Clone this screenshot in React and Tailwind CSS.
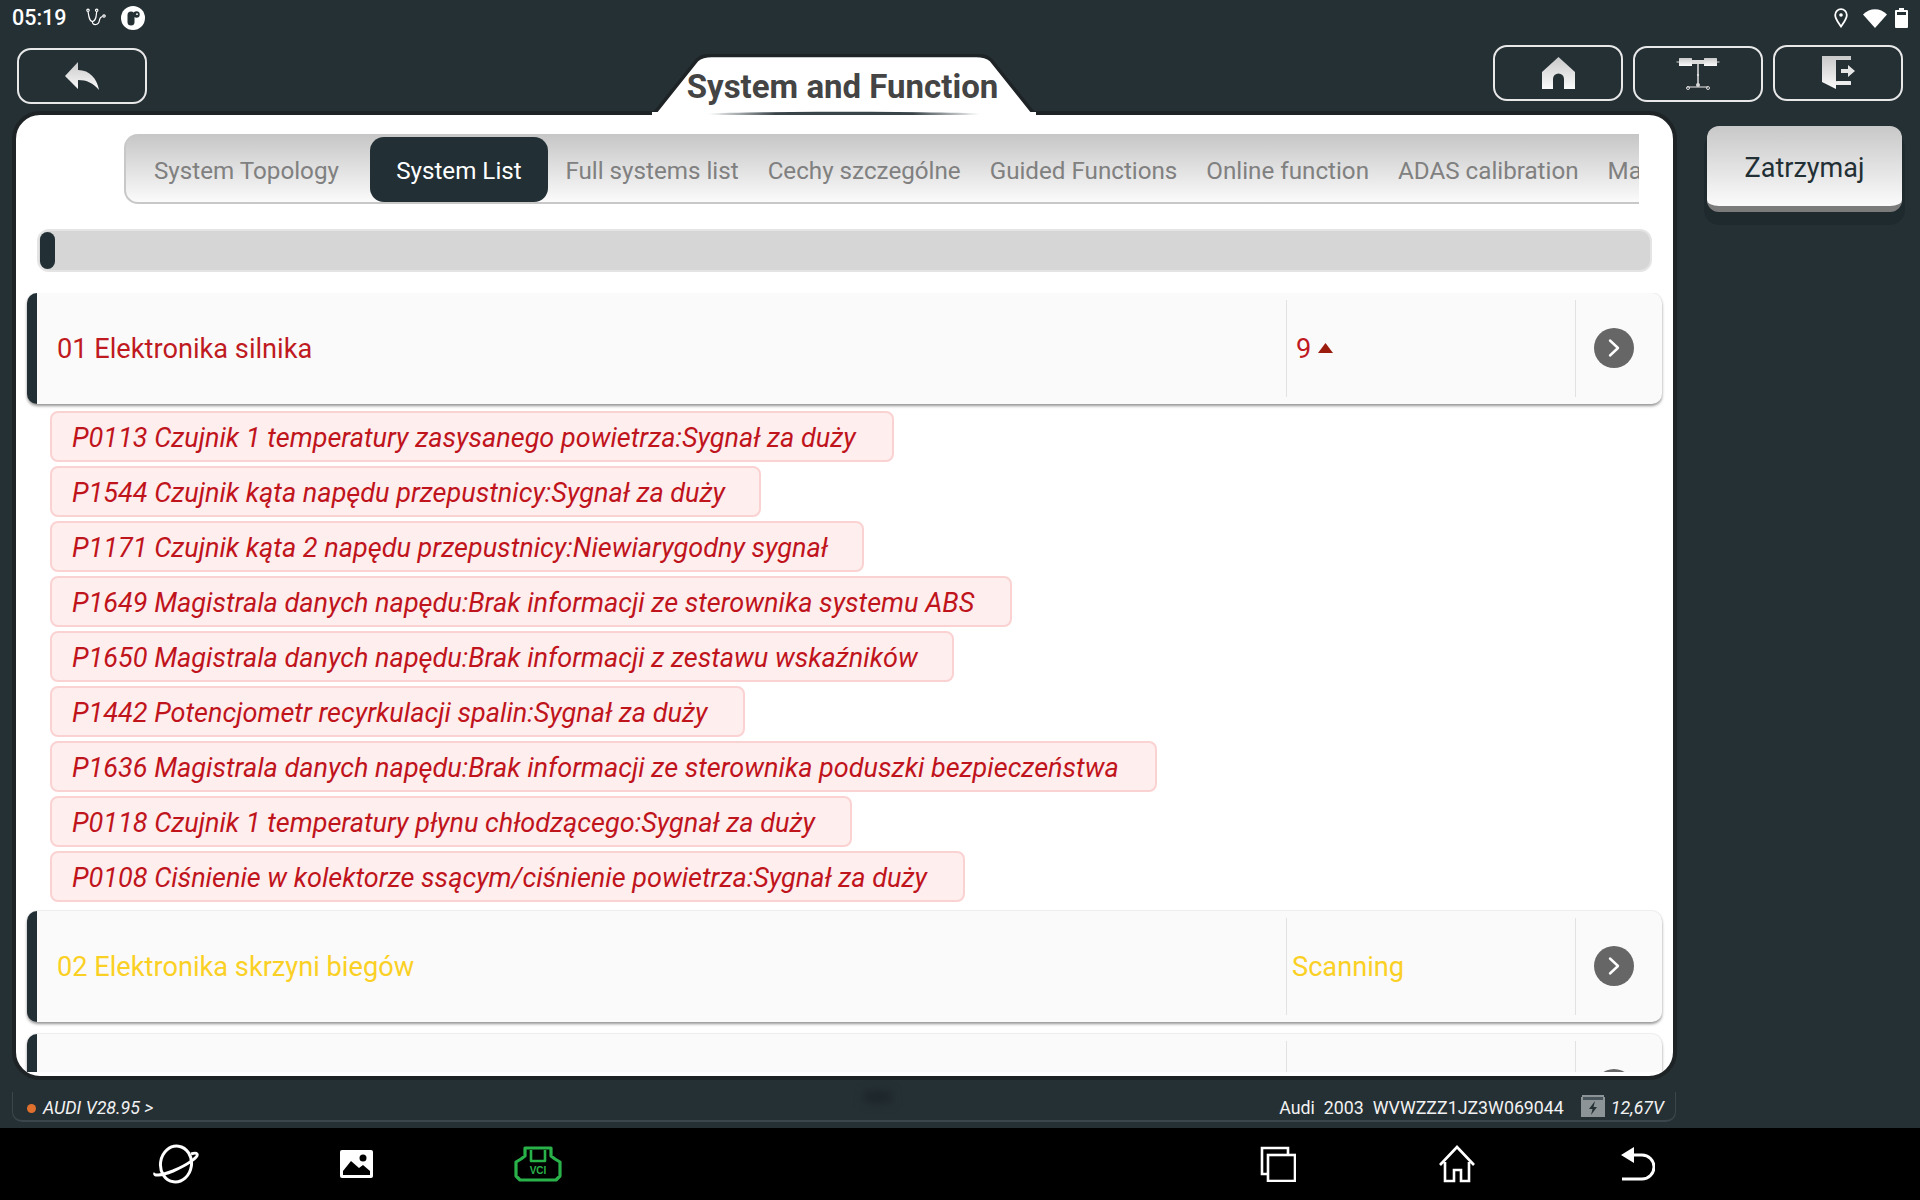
import React from "react";

const tabs = ["Full systems list", "Cechy szczególne", "Guided Functions", "Online function", "ADAS calibration", "Maintenance"];
const faults = [
  ["P0113 Czujnik 1 temperatury zasysanego powietrza:Sygnał za duży", 844],
  ["P1544 Czujnik kąta napędu przepustnicy:Sygnał za duży", 711],
  ["P1171 Czujnik kąta 2 napędu przepustnicy:Niewiarygodny sygnał", 814],
  ["P1649 Magistrala danych napędu:Brak informacji ze sterownika systemu ABS", 962],
  ["P1650 Magistrala danych napędu:Brak informacji z zestawu wskaźników", 904],
  ["P1442 Potencjometr recyrkulacji spalin:Sygnał za duży", 695],
  ["P1636 Magistrala danych napędu:Brak informacji ze sterownika poduszki bezpieczeństwa", 1107],
  ["P0118 Czujnik 1 temperatury płynu chłodzącego:Sygnał za duży", 802],
  ["P0108 Ciśnienie w kolektorze ssącym/ciśnienie powietrza:Sygnał za duży", 915],
];

function Grad({ id }) {
  return (
    <defs>
      <linearGradient id={id} x1="0" y1="0" x2="0" y2="1">
        <stop offset="0" stopColor="#c9c9c9" />
        <stop offset="1" stopColor="#fbfbfb" />
      </linearGradient>
    </defs>
  );
}

function OutlineButton({ children, className }) {
  return (
    <div className={"w-[130px] h-[56px] rounded-[14px] border-2 border-[#e8e8e8] flex items-center justify-center " + className}>
      {children}
    </div>
  );
}

function Chevron() {
  return (
    <div className="w-10 h-10 rounded-full bg-[#666666] flex items-center justify-center">
      <svg width="14" height="20" viewBox="0 0 14 20" fill="none">
        <path d="M3 2.5 L11 10 L3 17.5" stroke="#fff" strokeWidth="2.4" strokeLinecap="round" strokeLinejoin="round" />
      </svg>
    </div>
  );
}

function Row({ label, color, status, statusPad }) {
  return (
    <div className="h-[111px] shrink-0 flex rounded-[10px] border-l-[10px] border-[#222f34] bg-[#fafafa] py-[7px] shadow-[0_2px_3px_rgba(0,0,0,0.42),0_-1px_1px_rgba(0,0,0,0.06)]">
      <div className={"flex-1 flex items-center pl-5 pt-[2px] text-[27.2px] leading-none " + color}>{label}</div>
      <div className={"w-[289px] shrink-0 border-l border-[#e2e2e2] flex items-center pt-[2px] text-[27.2px] leading-none " + statusPad + " " + color}>{status}</div>
      <div className="w-[87px] shrink-0 border-l border-[#e2e2e2] flex items-center justify-center pr-[10px] pb-[2px]">
        <Chevron />
      </div>
    </div>
  );
}

export default function App() {
  return (
    <div className="w-[1920px] h-[1200px] overflow-hidden flex flex-col bg-[#253035] [font-family:Roboto,sans-serif]">
      {/* Android status bar */}
      <div className="h-[36px] shrink-0 flex items-center pl-3 pr-3 text-white">
        <span className="text-[21.5px] font-medium leading-none">05:19</span>
        <svg className="ml-[19px]" width="22" height="20" viewBox="0 0 22 20" fill="none" stroke="#fff" strokeWidth="1.2">
          <circle cx="2" cy="2.3" r="1.2" />
          <circle cx="10.7" cy="2.3" r="1.2" />
          <path d="M2 3.5 L3 9 Q4 13 6.3 13.5 Q9 13 10 9 L10.7 3.5" />
          <path d="M6.3 13.5 Q6.5 17 10 16.5 Q13 16 13.5 12 Q14 9 16.5 8.5" />
          <circle cx="18" cy="8" r="1.2" />
        </svg>
        <svg className="ml-[13px]" width="24" height="24" viewBox="0 0 24 24">
          <circle cx="12" cy="12" r="12" fill="#fff" />
          <rect x="6.5" y="5.5" width="7" height="14" rx="3.5" fill="#253035" />
          <circle cx="15.5" cy="8.5" r="3.2" fill="#253035" />
          <circle cx="16" cy="8.2" r="0.9" fill="#fff" />
        </svg>
        <div className="ml-auto flex items-center">
          <svg width="14" height="20" viewBox="0 0 14 20" fill="none" stroke="#fff" strokeWidth="1.8">
            <path d="M7 18.5 C4 14 1.2 11 1.2 7 A5.8 5.8 0 0 1 12.8 7 C12.8 11 10 14 7 18.5 Z" />
            <circle cx="7" cy="7" r="1.8" fill="#fff" stroke="none" />
          </svg>
          <svg className="ml-[15px]" width="24" height="19" viewBox="0 0 24 19">
            <path d="M0 5.5 C7 -1.5 17 -1.5 24 5.5 L12 19 Z" fill="#fff" />
          </svg>
          <svg className="ml-[8px]" width="13" height="20" viewBox="0 0 13 20">
            <path d="M4 0 H9 V2 H12 Q13 2 13 3 V19 Q13 20 12 20 H1 Q0 20 0 19 V3 Q0 2 1 2 H4 Z" fill="#fff" />
            <rect x="2" y="4" width="9" height="3" fill="#253035" />
          </svg>
        </div>
      </div>

      {/* Header */}
      <div className="h-[75px] shrink-0 flex items-start relative z-10">
        <OutlineButton className="ml-[17px] mt-[12px]">
          <svg width="36" height="30" viewBox="0 0 36 30">
            <Grad id="g-back" />
            <path d="M0 15 L13 1 V9 C25 9 32 18 34 29 C28 22 22 19 13 19 V28 Z" fill="url(#g-back)" transform="translate(1 0)" />
          </svg>
        </OutlineButton>
        <div className="relative ml-[505px] mt-[18px] w-[384px] h-[61px] flex items-start justify-center">
          <svg className="absolute inset-0" width="384" height="61" viewBox="0 0 384 61" fill="none">
            <defs>
              <linearGradient id="g-under" x1="0" y1="0" x2="1" y2="0">
                <stop offset="0" stopColor="#222f34" stopOpacity="0" />
                <stop offset="0.25" stopColor="#222f34" stopOpacity="0.9" />
                <stop offset="0.75" stopColor="#222f34" stopOpacity="0.9" />
                <stop offset="1" stopColor="#222f34" stopOpacity="0" />
              </linearGradient>
            </defs>
            <path d="M1 61 L45 6 Q50 1.5 60 1.5 H324 Q334 1.5 339 6 L383 61 Z" fill="#fff" stroke="#1e2326" strokeWidth="3.5" strokeLinejoin="round" />
            <rect x="0" y="58" width="384" height="3" fill="#fff" />
            <ellipse cx="192" cy="60" rx="137" ry="2.2" fill="url(#g-under)" />
          </svg>
          <span className="relative -ml-[3px] mt-[13px] text-[33px] font-bold leading-[40px] text-[#444444] whitespace-nowrap">System and Function</span>
        </div>
        <div className="ml-auto mr-[17px] flex gap-[10px] mt-[9px]">
          <OutlineButton>
            <svg width="33" height="33" viewBox="0 0 33 33">
              <Grad id="g-home" />
              <path d="M16.5 0 L33 15 V32 H22 V22 A5.5 5.5 0 0 0 11 22 V32 H0 V15 Z" fill="url(#g-home)" />
            </svg>
          </OutlineButton>
          <OutlineButton className="mt-px">
            <svg width="44" height="34" viewBox="0 0 44 34" fill="none">
              <Grad id="g-topo" />
              <path d="M0.5 5 H43.5" stroke="#d8d8d8" strokeWidth="1" />
              <rect x="3" y="1" width="13" height="8" rx="0.5" fill="url(#g-topo)" />
              <rect x="28" y="1" width="13" height="8" rx="0.5" fill="url(#g-topo)" />
              <rect x="16" y="3" width="12" height="4" fill="#dcdcdc" />
              <path d="M22 7 V28" stroke="#d8d8d8" strokeWidth="1.6" />
              <path d="M11 30 H32" stroke="#cfcfcf" strokeWidth="1.2" />
              <circle cx="22" cy="18" r="1.1" fill="#e4e4e4" />
              <circle cx="22" cy="28" r="2" fill="#d8d8d8" />
              <circle cx="12" cy="31" r="1.5" stroke="#d8d8d8" />
              <circle cx="32" cy="31" r="1.5" stroke="#d8d8d8" />
            </svg>
          </OutlineButton>
          <OutlineButton>
            <svg width="35" height="34" viewBox="0 0 35 34">
              <Grad id="g-exit" />
              <path d="M1 0 H30 V4 H15 V33 L1 26 Z" fill="url(#g-exit)" />
              <rect x="15" y="25" width="15" height="4" rx="0.5" fill="#ededed" />
              <path d="M20 13 H27 V9 L34 15 L27 21 V17 H20 Z" fill="#e6e6e6" />
            </svg>
          </OutlineButton>
        </div>
      </div>

      {/* Main */}
      <div className="flex shrink-0 items-start">
        <div className="ml-3 w-[1665px] h-[969px] rounded-[28px] border-4 border-[#1e2326] bg-white overflow-hidden flex flex-col">
          <div className="ml-[108px] mt-[19px] w-[1515px] h-[70px] shrink-0 overflow-hidden rounded-l-[14px] border-l-2 border-b-2 border-[#c8c8c8] bg-linear-to-b from-[#c6c6c6] to-[#fbfbfb] flex items-center pl-[14px] text-[24.2px] text-[#808080] leading-none whitespace-nowrap">
            <div className="px-[14px] pt-[6px] shrink-0">System Topology</div>
            <div className="ml-[17px] mr-[3px] mt-[2px] w-[178px] h-[65px] shrink-0 rounded-[14px] bg-[#222f34] text-white flex items-center justify-center pt-[4px]">System List</div>
            {tabs.map((t) => (
              <div key={t} className="px-[14.5px] pt-[6px] shrink-0">{t}</div>
            ))}
          </div>

          <div className="mx-[21px] mt-[25px] h-[43px] shrink-0 rounded-[12px] border-2 border-[#e4e4e4] bg-[#d6d6d6] flex items-center p-px">
            <div className="w-[15px] h-[37px] rounded-full bg-[#222f34]" />
          </div>

          <div className="mt-[21px] px-[11px] h-[779px] shrink-0 overflow-hidden flex flex-col">
            <Row
              label="01 Elektronika silnika"
              color="text-[#bf1a1f]"
              statusPad="pl-[9px]"
              status={
                <span className="flex items-center">
                  9
                  <svg className="ml-[7px] mb-[3px]" width="15" height="10" viewBox="0 0 15 10">
                    <path d="M7.5 0 L15 10 H0 Z" fill="#9b1c0c" />
                  </svg>
                </span>
              }
            />
            <div className="mt-[7px] flex flex-col gap-1 pl-[23px] pb-[9px]">
              {faults.map(([text, w]) => (
                <div key={text} style={{ width: w }} className="h-[51px] shrink-0 rounded-[8px] border-2 border-[#fbd2d2] bg-[#ffeeee] flex items-center pl-[20px] pt-[5px] italic text-[27.05px] text-[#c0141c] leading-none whitespace-nowrap">
                  {text}
                </div>
              ))}
            </div>
            <Row label="02 Elektronika skrzyni biegów" color="text-[#fbd024]" statusPad="pl-[5px]" status="Scanning" />
            <div className="mt-3">
              <Row label="" color="" statusPad="" status="" />
            </div>
          </div>
        </div>

        <div className="ml-[30px] mt-[15px] w-[195px] h-[86px] rounded-[12px] border-b-[6px] border-[#7b7b7b] bg-linear-to-b from-[#c8c8c8] to-[#fbfbfb] flex items-center justify-center pt-[5px] text-[27px] text-[#222f34] leading-none shadow-[0_10px_0_3px_#1f2a2f]">
          Zatrzymaj
        </div>
      </div>

      {/* Info strip */}
      <div className="relative ml-3 mt-3 w-[1664px] h-[30px] pt-[4px] shrink-0 rounded-b-[10px] border-b-2 border-l border-r border-[#3b464c] flex items-center text-[17.8px] text-[#f2f2f2] leading-none">
        <span className="ml-[14px] w-[9px] h-[9px] rounded-full bg-[#e0702e]" />
        <span className="ml-[7px] italic">AUDI V28.95 &gt;</span>
        <span className="absolute left-[850px] -top-[1px] w-[30px] h-[12px] rounded-full bg-[#1c2529] blur-[5px]" />
        <span className="ml-auto">Audi</span>
        <span className="ml-[9px]">2003</span>
        <span className="ml-[9px]">WVWZZZ1JZ3W069044</span>
        <svg className="ml-[16px] -mt-[4px]" width="26" height="24" viewBox="0 0 26 24">
          <path d="M2 1 H24 V3 H25 V23 H1 V3 H2 Z" fill="#8c9498" />
          <rect x="3" y="3" width="20" height="3" fill="#4a555b" />
          <path d="M15 7 L9 15 H12.5 L11 21 L17 13 H13.5 Z" fill="#253035" />
        </svg>
        <span className="ml-[5px] mr-[11px] italic">12,67V</span>
      </div>

      {/* Nav bar */}
      <div className="mt-[6px] h-[72px] shrink-0 bg-black relative flex items-center">
        <svg className="ml-[153px]" width="46" height="40" viewBox="0 0 46 40" fill="none" stroke="#fff" strokeWidth="3">
          <ellipse cx="23" cy="20" rx="15.5" ry="18" transform="rotate(8 23 20)" />
          <path d="M2 29 C0 32 7 32 20 27 C34 21 46 13 44 10 C43 8.5 41 9 38 10" />
        </svg>
        <svg className="ml-[141px]" width="33" height="28" viewBox="0 0 33 28">
          <rect width="33" height="28" rx="2" fill="#fff" />
          <path d="M3 21 L11 11 L19 18 L23 15 L30 21 V25 H3 Z" fill="#000" />
          <circle cx="23" cy="8" r="3.5" fill="#000" />
        </svg>
        <svg className="ml-[141px]" width="48" height="36" viewBox="0 0 48 36" fill="none" stroke="#2ab24a" strokeWidth="3.2" strokeLinejoin="round">
          <path d="M11 2 H37 V10 L41 13 L46 16 V30 L42 34 H6 L2 30 V16 L7 13 L11 10 Z" />
          <path d="M17 4 V15 H31 V4" strokeWidth="2.6" />
          <text x="24" y="28" fontSize="10" fontWeight="700" fill="#2ab24a" stroke="none" textAnchor="middle" fontFamily="Liberation Sans, sans-serif">VCI</text>
        </svg>
        <svg className="ml-[698px]" width="36" height="36" viewBox="0 0 36 36" fill="none" stroke="#fff" strokeWidth="2.6">
          <path d="M7 28 H2 V2 H28 V8" />
          <rect x="8" y="9" width="27" height="26" />
        </svg>
        <svg className="ml-[143px]" width="36" height="38" viewBox="0 0 36 38" fill="none" stroke="#fff" strokeWidth="2.6">
          <path d="M1 20 L18 2 L35 20 M6 17 V36 H15 V25 H22 V36 H30 V17" />
        </svg>
        <svg className="ml-[144px]" width="36" height="36" viewBox="0 0 36 36" fill="none">
          <path d="M2 9 L15 1 V17 Z" fill="#fff" />
          <path d="M12 9 H23 A12 12 0 0 1 23 33 H3" stroke="#fff" strokeWidth="3" />
        </svg>
      </div>
    </div>
  );
}
